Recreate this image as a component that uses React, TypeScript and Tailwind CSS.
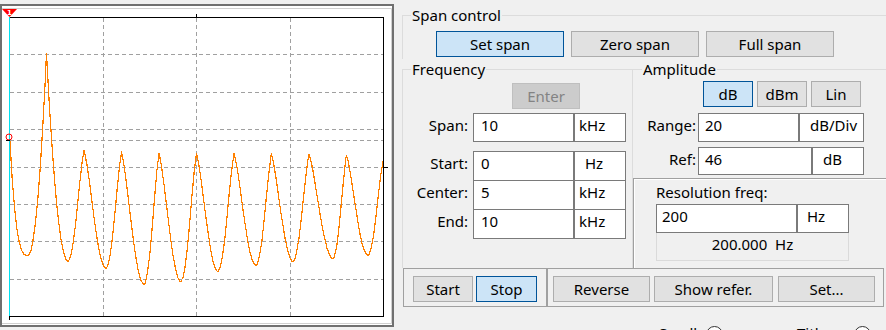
import React from "react";

// peaks / troughs of the spectrum trace, in page pixels
const EXTREMES: [number, number][] = [
  [10, 141],
  [28, 255],
  [46.5, 53],
  [68, 261],
  [84, 150],
  [106, 268],
  [121.5, 152],
  [144, 284],
  [159, 153],
  [181, 281],
  [196.5, 153],
  [218, 271],
  [234, 153],
  [256, 265],
  [271.5, 154],
  [293, 261],
  [309, 154],
  [333, 258],
  [346.5, 155],
  [368, 255],
  [383, 161],
];

// shape of the flank, 0 at the peak, 1 at the trough
const flank = (t: number, seg: number) => {
  if (seg === 0) return 1 - Math.pow(1 - t, 3);
  if (seg === 1 || seg === 2) return 1 - (1 - t) * (1 - t);
  return Math.pow(Math.sin((t * Math.PI) / 2), 1.35);
};

function traceY(x: number) {
  for (let j = 0; j < EXTREMES.length - 1; j++) {
    const [x0, y0] = EXTREMES[j];
    const [x1, y1] = EXTREMES[j + 1];
    if (x <= x1 || j === EXTREMES.length - 2) {
      const peakFirst = y0 < y1;
      const [px, py, tx, ty] = peakFirst ? [x0, y0, x1, y1] : [x1, y1, x0, y0];
      const t = Math.min(1, Math.max(0, Math.abs(x - px) / Math.abs(tx - px)));
      return py + (ty - py) * flank(t, j);
    }
  }
  return 0;
}

const tracePoints = (() => {
  const n = 160;
  const xs: number[] = [];
  for (let i = 0; i <= n; i++) xs.push(10 + (i * 373) / n);
  EXTREMES.forEach(([x]) => xs.push(x));
  xs.sort((a, b) => a - b);
  return xs.map((x) => `${x.toFixed(1)},${Math.round(traceY(x)) + 0.5}`).join(" ");
})();

const gridX = [103.5, 196.5, 290.5];
const gridY = [54.5, 92.5, 129.5, 140.5, 167.5, 204.5, 241.5, 279.5];

const Chart = () => (
  <div className="w-[394px] h-[323px] mt-[4px] border-2 border-[#707070] bg-white shrink-0">
    <svg width={390} height={319} viewBox="2 6 390 319" className="block">
      <path d="M2 8.5H391.5V323.5H2" fill="none" stroke="#d0d0d0" />
      {gridX.map((x) => (
        <line key={x} x1={x} y1={18} x2={x} y2={316} stroke="#a0a0a0" strokeDasharray="4 3" />
      ))}
      {gridY.map((y) => (
        <line key={y} x1={10} y1={y} x2={383} y2={y} stroke="#a0a0a0" strokeDasharray="4 3" />
      ))}
      <path
        d="M9 17.5H383.5V316.5H9 M196.5 14V17 M9.5 316V320 M384 167.5H388"
        fill="none"
        stroke="#000"
        shapeRendering="crispEdges"
      />
      <polyline points={tracePoints} fill="none" stroke="#ff8000" strokeWidth={1.2} shapeRendering="crispEdges" />
      <line x1={9.5} y1={17} x2={9.5} y2={316} stroke="#00e0f0" />
      <polygon points="2,9 17,9 9.5,17" fill="#ff0000" />
      <text x={9.5} y={14.5} fontSize={7} fontWeight="bold" fill="#fff" textAnchor="middle" fontFamily="DejaVu Sans, sans-serif">
        1
      </text>
      <circle cx={9} cy={137} r={3} fill="none" stroke="#ff0000" />
      <line x1={6} y1={140.5} x2={10} y2={140.5} stroke="#000" />
    </svg>
  </div>
);

type Kind = "normal" | "active" | "disabled";
const kindClass: Record<Kind, string> = {
  normal: "bg-[#e1e1e1] border-[#adadad] text-black",
  active: "bg-[#cce4f7] border-[#005499] text-black",
  disabled: "bg-[#cccccc] border-[#bfbfbf] text-[#838383]",
};

const Btn = ({ label, className = "", kind = "normal" }: { label: string; className?: string; kind?: Kind }) => (
  <div className={`flex items-center justify-center border h-[26px] shrink-0 ${kindClass[kind]} ${className}`}>{label}</div>
);

const Box = ({ children, className = "" }: { children?: React.ReactNode; className?: string }) => (
  <div className={`bg-white border border-[#7a7a7a] pt-[1px] shrink-0 whitespace-pre ${className}`}>{children}</div>
);

const Label = ({ text, className = "" }: { text: string; className?: string }) => (
  <div className={`text-right pt-[2px] shrink-0 ${className}`}>{text}</div>
);

const FreqRow = ({ label, value, unit, unitPad, first }: { label: string; value: string; unit: string; unitPad: string; first?: boolean }) => (
  <div className={`flex h-[30px] ${first ? "" : "-mt-px"}`}>
    <Label text={label} className="w-[65px]" />
    <Box className="ml-[5px] w-[101px] h-[30px] pl-[7px]">{value}</Box>
    <Box className={`w-[52px] h-[30px] ${unitPad}`}>{unit}</Box>
  </div>
);

export default function App() {
  return (
    <div className="w-[886px] h-[330px] overflow-hidden bg-[#f0f0f0] flex items-start text-[15px] leading-[20px] text-black font-['Noto_Sans',sans-serif]">
      <Chart />

      <div className="ml-[8px] w-[490px] shrink-0 flex flex-col">
        {/* span control */}
        <fieldset className="shrink-0 mt-[5px] border border-b-0 border-r-0 border-[#dcdcdc] pb-[2px]">
          <legend className="ml-[8px] px-[1px] leading-[20px]">Span control</legend>
          <div className="flex gap-[7px] ml-[33px] mt-[6px]">
            <Btn label="Set span" kind="active" className="w-[128px]" />
            <Btn label="Zero span" className="w-[128px]" />
            <Btn label="Full span" className="w-[128px]" />
          </div>
        </fieldset>

        <div className="flex h-[209px] shrink-0">
          {/* frequency */}
          <fieldset className="w-[231px] shrink-0 border border-b-0 border-[#dcdcdc]">
            <legend className="ml-[8px] px-[1px] leading-[20px]">Frequency</legend>
            <Btn label="Enter" kind="disabled" className="ml-[109px] mt-[4px] w-[68px]" />
            <div className="flex h-[29px] mt-[4px]">
              <Label text="Span:" className="w-[65px]" />
              <Box className="ml-[5px] w-[101px] h-[29px] pl-[7px]">10</Box>
              <Box className="w-[52px] h-[29px] pl-[4px]">kHz</Box>
            </div>
            <div className="mt-[9px]">
              <FreqRow first label="Start:" value="0" unit="Hz" unitPad="pl-[10px]" />
              <FreqRow label="Center:" value="5" unit="kHz" unitPad="pl-[4px]" />
              <FreqRow label="End:" value="10" unit="kHz" unitPad="pl-[4px]" />
            </div>
          </fieldset>

          {/* amplitude + resolution */}
          <div className="flex-1 flex flex-col">
            <fieldset className="shrink-0 border-t border-[#dcdcdc] pb-[1px]">
              <legend className="ml-[9px] px-[1px] leading-[20px]">Amplitude</legend>
              <div className="flex gap-[4px] ml-[70px] mt-[2px]">
                <Btn label="dB" kind="active" className="w-[50px]" />
                <Btn label="dBm" className="w-[50px]" />
                <Btn label="Lin" className="w-[50px]" />
              </div>
              <div className="flex h-[29px] mt-[6px]">
                <Label text="Range:" className="w-[63px]" />
                <Box className="ml-[2px] w-[101px] h-[29px] pl-[6px]">20</Box>
                <Box className="w-[65px] h-[29px] pl-[10px]">dB/Div</Box>
              </div>
              <div className="flex h-[28px] mt-[5px]">
                <Label text="Ref:" className="w-[63px]" />
                <Box className="ml-[2px] w-[114px] h-[28px] pl-[6px]">46</Box>
                <Box className="w-[52px] h-[28px] pl-[10px]">dB</Box>
              </div>
            </fieldset>

            <div className="mt-[2px] flex-1 border-t border-l border-[#a0a0a0]">
              <div className="h-full border-t border-l border-white pl-[21px]">
                <div className="mt-[2px]">Resolution freq:</div>
                <div className="flex mt-[2px]">
                  <Box className="w-[141px] h-[29px] pl-[5px]">200</Box>
                  <Box className="w-[52px] h-[29px] pl-[9px]">Hz</Box>
                </div>
                <div className="-mt-px w-[193px] h-[29px] border border-[#dadada] flex justify-center pt-[1px] whitespace-pre">
                  200.000  Hz
                </div>
              </div>
            </div>
          </div>
        </div>

        {/* bottom buttons */}
        <div className="flex ml-px h-[39px] shrink-0">
          <div className="w-[144px] shrink-0 border border-[#a0a0a0] flex items-start pl-[9px] pt-[7px] gap-[3px]">
            <Btn label="Start" className="w-[60px]" />
            <Btn label="Stop" kind="active" className="w-[61px]" />
          </div>
          <div className="w-[337px] shrink-0 border border-[#a0a0a0] flex items-start pl-[5px] pt-[7px]">
            <Btn label="Reverse" className="w-[97px]" />
            <Btn label="Show refer." className="ml-[4px] w-[119px]" />
            <Btn label="Set..." className="ml-[5px] w-[97px]" />
          </div>
        </div>

        <div className="flex items-start shrink-0 mt-[19px] ml-[257px]">
          <div className="w-[47px] -mt-[3px] shrink-0">Scroll</div>
          <div className="w-[17px] h-[17px] rounded-full border border-[#333] bg-white shrink-0" />
          <div className="ml-[74px] w-[57px] -mt-[3px] shrink-0">Title</div>
          <div className="w-[17px] h-[17px] rounded-full border border-[#333] bg-white shrink-0" />
        </div>
      </div>
    </div>
  );
}
